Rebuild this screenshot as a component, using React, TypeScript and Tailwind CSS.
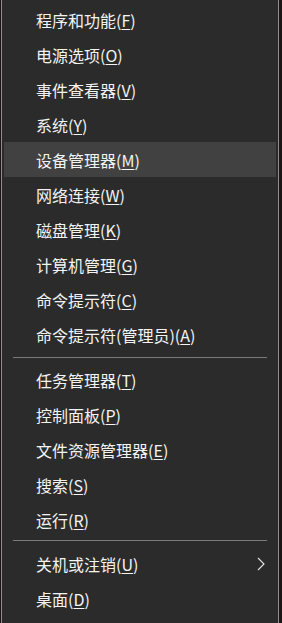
import React from 'react';

type Item = { label: string; key: string; highlighted?: boolean; submenu?: boolean };

const groups: Item[][] = [
    [
        { label: '程序和功能', key: 'F' },
        { label: '电源选项', key: 'O' },
        { label: '事件查看器', key: 'V' },
        { label: '系统', key: 'Y' },
        { label: '设备管理器', key: 'M', highlighted: true },
        { label: '网络连接', key: 'W' },
        { label: '磁盘管理', key: 'K' },
        { label: '计算机管理', key: 'G' },
        { label: '命令提示符', key: 'C' },
        { label: '命令提示符(管理员)', key: 'A' },
    ],
    [
        { label: '任务管理器', key: 'T' },
        { label: '控制面板', key: 'P' },
        { label: '文件资源管理器', key: 'E' },
        { label: '搜索', key: 'S' },
        { label: '运行', key: 'R' },
    ],
    [
        { label: '关机或注销', key: 'U', submenu: true },
        { label: '桌面', key: 'D' },
    ],
];

function MenuRow({ item }: { item: Item }) {
    return (
        <div
            className={`mx-[2px] flex h-[35px] items-center justify-between pl-8 pr-[11px] ${
                item.highlighted ? 'bg-[#414141]' : ''
            }`}
        >
            <span className="text-[16px] leading-none text-[#f3f3f3]">
                {item.label}(<span className="underline underline-offset-2">{item.key}</span>)
            </span>
            {item.submenu && (
                <svg width="8" height="14" viewBox="0 0 8 14" fill="none">
                    <path d="M1 1l6 6-6 6" stroke="#e6e6e6" strokeWidth="1.1" />
                </svg>
            )}
        </div>
    );
}

export default function App() {
    return (
        <div
            className="flex h-[623px] w-[282px] bg-[#1c1617]"
            style={{ fontFamily: '"Noto Sans CJK SC", "Noto Sans", sans-serif' }}
        >
            <div className="ml-[1px] flex w-[278px] flex-col border-x border-[#8c8c8c] bg-[#2b2b2b] pt-[2px]">
                {groups.map((group, gi) => (
                    <div key={gi}>
                        {gi === 1 && (
                            <div className="flex h-[10px] items-center px-[11px]">
                                <div className="h-px w-full bg-[#7a7a7a]" />
                            </div>
                        )}
                        {gi === 2 && (
                            <div className="h-[9px] px-[11px] pt-[3px]">
                                <div className="h-px w-full bg-[#7a7a7a]" />
                            </div>
                        )}
                        {group.map((item) => (
                            <MenuRow key={item.key} item={item} />
                        ))}
                    </div>
                ))}
            </div>
        </div>
    );
}
